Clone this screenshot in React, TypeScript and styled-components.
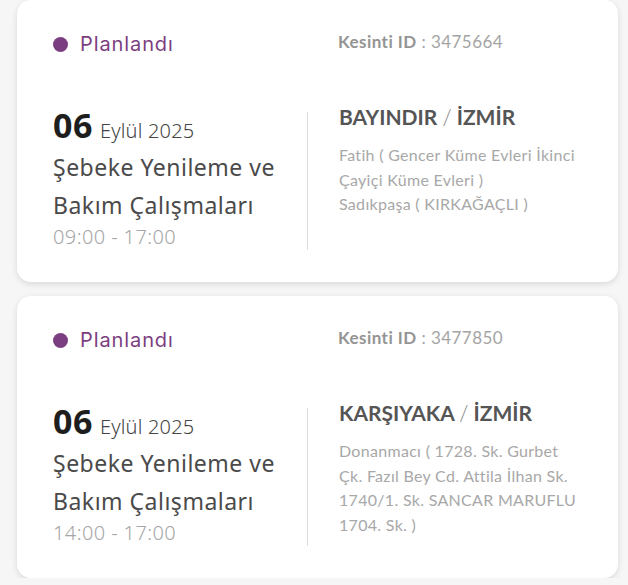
import React from 'react'
import styled, { createGlobalStyle } from 'styled-components'

const GlobalStyle = createGlobalStyle`
    body {
        margin: 0;
        background: #f6f6f6;
    }
`

const geo = `'Lato', 'Liberation Sans', sans-serif`
const humanist = `'Noto Sans', 'Open Sans', sans-serif`

const List = styled.div`
    display: flex;
    flex-direction: column;
    gap: 14px;
    padding: 0 10px 0 17px;
    width: 601px;
`

const Card = styled.div`
    background: #ffffff;
    border-radius: 14px;
    box-shadow: 0 2px 6px rgba(0, 0, 0, 0.12);
    height: 282px;
    box-sizing: border-box;
    padding: 32px 36px 0 36px;
`

const Row = styled.div`
    display: grid;
    grid-template-columns: 254px 1fr;
`

const Header = styled(Row)`
    height: 24px;
    align-items: center;
    margin-bottom: 56px;
`

const Status = styled.div`
    display: flex;
    align-items: center;
    gap: 12px;
    font-family: 'Inter', ${geo};
    font-size: 20px;
    letter-spacing: 0.9px;
    color: #7b3f81;
`

const Dot = styled.span`
    width: 15px;
    height: 15px;
    border-radius: 50%;
    background: #7b3f81;
`

const OutageId = styled.div`
    padding-left: 31px;
    margin-top: -6px;
    font-family: ${geo};
    font-size: 17px;
    letter-spacing: 0.45px;
    color: #a4a4a4;

    b {
        font-weight: 700;
        color: #949494;
    }
`

const When = styled.div`
    font-family: ${humanist};
`

const DateLine = styled.div`
    display: flex;
    align-items: baseline;
    gap: 7px;
    margin-top: -4px;
    height: 40px;
    line-height: 34px;
    color: #444;
`

const Day = styled.span`
    font-size: 34px;
    font-weight: 700;
    letter-spacing: 0.5px;
    color: #1e1e1e;
`

const Month = styled.span`
    font-size: 20px;
    font-weight: 300;
    letter-spacing: 0.2px;
`

const Title = styled.div`
    font-size: 23px;
    letter-spacing: 0.5px;
    line-height: 38px;
    color: #4a4a4a;
`

const Hours = styled.div`
    font-size: 20px;
    font-weight: 300;
    letter-spacing: 0.4px;
    line-height: 26px;
    color: #a6a6a6;
`

const Place = styled.div`
    border-left: 1px solid #dcdcdc;
    padding-left: 31px;
    font-family: ${geo};
`

const District = styled.div`
    margin-top: -9px;
    font-size: 21px;
    font-weight: 700;
    line-height: 28px;
    color: #555;

    span {
        font-weight: 300;
        color: #777;
    }
`

const Address = styled.div`
    margin-top: 12px;
    font-size: 16px;
    letter-spacing: 0.3px;
    line-height: 24.5px;
    color: #a8a8a8;
`

type Outage = {
    id: string
    hours: string
    district: string
    address: string[]
}

const outages: Outage[] = [
    {
        id: '3475664',
        hours: '09:00 - 17:00',
        district: 'BAYINDIR',
        address: ['Fatih ( Gencer Küme Evleri İkinci', 'Çayiçi Küme Evleri )', 'Sadıkpaşa ( KIRKAĞAÇLI )']
    },
    {
        id: '3477850',
        hours: '14:00 - 17:00',
        district: 'KARŞIYAKA',
        address: ['Donanmacı ( 1728. Sk. Gurbet', 'Çk. Fazıl Bey Cd. Attila İlhan Sk.', '1740/1. Sk. SANCAR MARUFLU', '1704. Sk. )']
    }
]

const OutageCard = ({ outage }: { outage: Outage }) => (
    <Card>
        <Header>
            <Status>
                <Dot />
                Planlandı
            </Status>
            <OutageId>
                <b>Kesinti ID</b> : {outage.id}
            </OutageId>
        </Header>
        <Row>
            <When>
                <DateLine>
                    <Day>06</Day>
                    <Month>Eylül 2025</Month>
                </DateLine>
                <Title>
                    Şebeke Yenileme ve
                    <br />
                    Bakım Çalışmaları
                </Title>
                <Hours>{outage.hours}</Hours>
            </When>
            <Place>
                <District>
                    {outage.district} <span>/</span> İZMİR
                </District>
                <Address>
                    {outage.address.map(line => (
                        <div key={line}>{line}</div>
                    ))}
                </Address>
            </Place>
        </Row>
    </Card>
)

const App = () => (
    <>
        <GlobalStyle />
        <List>
            {outages.map(o => (
                <OutageCard key={o.id} outage={o} />
            ))}
        </List>
    </>
)

export default App
